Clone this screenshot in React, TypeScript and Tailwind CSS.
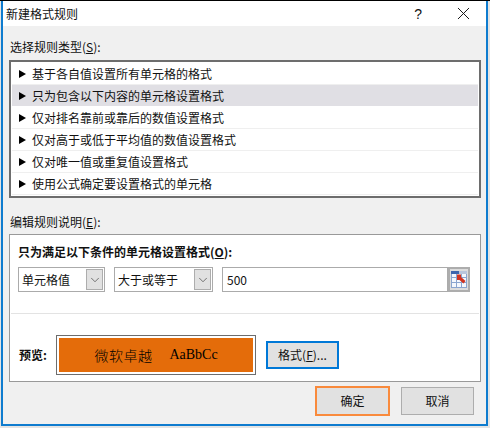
import React from 'react';
import { ChevronDown, X } from 'lucide-react';

const RULES = [
    '基于各自值设置所有单元格的格式',
    '只为包含以下内容的单元格设置格式',
    '仅对排名靠前或靠后的数值设置格式',
    '仅对高于或低于平均值的数值设置格式',
    '仅对唯一值或重复值设置格式',
    '使用公式确定要设置格式的单元格',
];

const Select = ({ label, width }: { label: string; width: string }) => (
    <div className={`flex items-center justify-between h-[25px] border border-[#ababab] bg-white pl-[3px] pr-[1px] ${width}`}>
        <span>{label}</span>
        <span className="flex items-center justify-center w-[17px] h-[21px] bg-[#e1e1e1] border border-[#adadad]">
            <ChevronDown className="w-[14px] h-[14px] text-[#444]" strokeWidth={1.2} />
        </span>
    </div>
);

const RangeIcon = () => (
    <svg width="16" height="17" viewBox="0 0 16 17">
        <rect x="0.5" y="0.5" width="15" height="16" fill="#f4f7fc" stroke="#8aa5cf" />
        <rect x="0" y="0" width="8" height="3" fill="#3d66ad" />
        <rect x="8" y="0" width="8" height="3" fill="#b9c6dc" />
        <path d="M0 6.5H16M0 11.5H16M5.5 3V17M10.5 3V17" stroke="#8aa5cf" />
        <path d="M6 3.5L10 3.5L10 6L14.5 10L12.5 12.5L8.5 9L6 9Z" fill="#d2331f" />
    </svg>
);

export default function App() {
    return (
        <div
            className="w-[490px] h-[428px] bg-[#e4e4e4] border-t border-t-black pl-[1px] overflow-hidden text-[12px] leading-[16px] text-[#111]"
            style={{ fontFamily: '"Noto Sans CJK SC", "Liberation Sans", sans-serif' }}
        >
            <div className="h-[425px] w-[487px] flex flex-col bg-[#f0f0f0] border-x-2 border-x-[#0f7ccf] border-b-2 border-b-[#0f7ccf]">
                <div className="flex items-center justify-between h-[25px] shrink-0 bg-white pl-[3px] pr-[12px]">
                    <span>新建格式规则</span>
                    <div className="flex items-center gap-[31px]">
                        <span className="text-[14px] font-['Liberation_Sans',sans-serif]">?</span>
                        <X className="w-[21px] h-[21px]" strokeWidth={1.1} />
                    </div>
                </div>

                <div className="flex flex-col flex-1 pl-[6px] pr-[5px]">
                    <div className="mt-[13px] mb-[5px] pl-[1px]">
                        选择规则类型(<span className="underline">S</span>):
                    </div>
                    <div className="h-[138px] shrink-0 border-2 border-[#6d6d6d] bg-white p-[1px]">
                        {RULES.map((rule, i) => (
                            <div
                                key={rule}
                                className={`flex items-center h-[22px] pl-[7px] gap-[6px] border-b ${i === 1 ? 'bg-[#e0dfe4] border-white' : 'border-[#efefef]'}`}
                            >
                                <span className="w-0 h-0 border-y-[4px] border-y-transparent border-l-[7px] border-l-black" />
                                <span>{rule}</span>
                            </div>
                        ))}
                    </div>

                    <div className="mt-[16px] mb-[4px] pl-[1px]">
                        编辑规则说明(<span className="underline">E</span>):
                    </div>
                    <div className="h-[148px] shrink-0 flex flex-col border border-[#999] bg-white p-[1px]">
                        <div className="mt-[8px] ml-[7px] font-bold">
                            只为满足以下条件的单元格设置格式(<span className="underline">O</span>):
                        </div>
                        <div className="flex mt-[7px] ml-[7px] gap-[9px]">
                            <Select label="单元格值" width="w-[87px]" />
                            <Select label="大于或等于" width="w-[99px]" />
                            <div className="flex items-center w-[226px] h-[25px] border border-[#ababab] pl-[4px]">500</div>
                            <span className="flex items-center justify-center w-[22px] h-[25px] -ml-[9px] bg-[#dcdcdc] border-2 border-[#adadad]">
                                <RangeIcon />
                            </span>
                        </div>
                        <div className="mt-[21px] h-[1px] bg-[#e3e3e3]" />
                        <div className="flex items-center mt-[21px] ml-[8px]">
                            <span className="w-[37px] font-bold">预览:</span>
                            <div className="w-[200px] h-[40px] border border-[#6d6d6d] p-[2px]">
                                <div className="flex items-center justify-center h-full bg-[#e46c0a] text-black gap-[17px]">
                                    <span className="text-[14px] tracking-[0.5px] font-light">微软卓越</span>
                                    <span className="font-['Liberation_Serif',serif] text-[14px]">AaBbCc</span>
                                </div>
                            </div>
                            <button className="flex items-center justify-center ml-[10px] w-[73px] h-[28px] bg-[#e1e1e1] border-2 border-[#0078d7]">
                                格式(<span className="underline">F</span>)...
                            </button>
                        </div>
                    </div>

                    <div className="flex items-center justify-end gap-[11px] mt-[4px] pr-[7px]">
                        <button className="w-[75px] h-[30px] bg-[#e1e1e1] border-2 border-[#f98a3c]">确定</button>
                        <button className="w-[73px] h-[28px] bg-[#e1e1e1] border border-[#adadad]">取消</button>
                    </div>
                </div>
            </div>
        </div>
    );
}
